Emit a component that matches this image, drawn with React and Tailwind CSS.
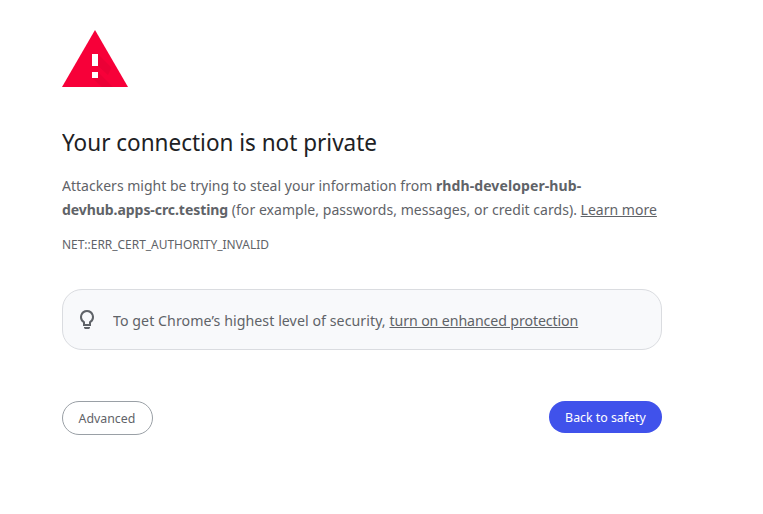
export default function App() {
  return (
    <main className="h-[514px] w-[763px] overflow-hidden bg-white pl-[62px] pt-[30px] font-['Noto_Sans',sans-serif] text-[#5f6368]">
      <div className="w-[600px]">
        <svg className="block h-[57px] w-[66px]" viewBox="0 0 66 57">
          <path d="M33 0 66 57H0Z" fill="#f70039" />
          <path d="M36 24 49.5 37.5 46 45 36 36ZM36 42 51 57H40L30 48h6Z" fill="#e30036" opacity=".6" />
          <path d="M30 24h6v12h-6zM30 42h6v6h-6z" fill="#fff" />
        </svg>
        <h1 className="mt-[39px] h-8 origin-left scale-x-[.9375] whitespace-nowrap text-[24px] leading-8 text-[#202124]">Your connection is not private</h1>
        <p className="mt-[15px] origin-left scale-x-[.935] whitespace-nowrap text-[15px] leading-6">
          <span>Attackers might be trying to steal your information from </span><b className="tracking-[.09px]">rhdh-developer-hub-</b><br />
          <b className="tracking-[-.08px]">devhub.apps-crc.testing</b><span className="tracking-[.03px]"> (for example, passwords, messages, or credit cards). </span><a className="underline">Learn more</a>
        </p>
        <div className="mt-[15px] h-[18px] origin-left scale-x-[.995] whitespace-nowrap text-[12px] leading-[18px]">NET::ERR_CERT_AUTHORITY_INVALID</div>
        <div className="mt-[35px] flex h-[61px] items-center rounded-[20px] border border-[#dadce0] bg-[#f8f9fb] pl-3 text-[15px]">
          <svg className="h-6 w-6" viewBox="0 0 24 24" fill="#5f6368">
            <path d="M12 2a7 7 0 0 0-4 12.74V18h8v-3.26A7 7 0 0 0 12 2Zm2.85 11.1-.85.6V16h-4v-2.3l-.85-.6a5 5 0 1 1 5.7 0ZM9 19h6v1l-1 1h-4l-1-1Z" />
          </svg>
          <p className="ml-[14px] mt-0.5 origin-left scale-x-[.945] whitespace-nowrap"><span className="tracking-[.065px]">To get Chrome’s highest level of security, </span><a className="tracking-[-.11px] underline">turn on enhanced protection</a></p>
        </div>
        <div className="mt-[51px] flex items-start justify-between text-[13px]">
          <button className="h-[34px] w-[91px] rounded-full border border-[#9aa0a6] pr-px pt-0.5"><span className="inline-block scale-x-[.95]">Advanced</span></button>
          <button className="h-8 w-[113px] whitespace-nowrap rounded-full bg-[#4052eb] pt-0.5 text-white"><span className="inline-block scale-x-[.95]">Back to safety</span></button>
        </div>
      </div>
    </main>
  );
}
